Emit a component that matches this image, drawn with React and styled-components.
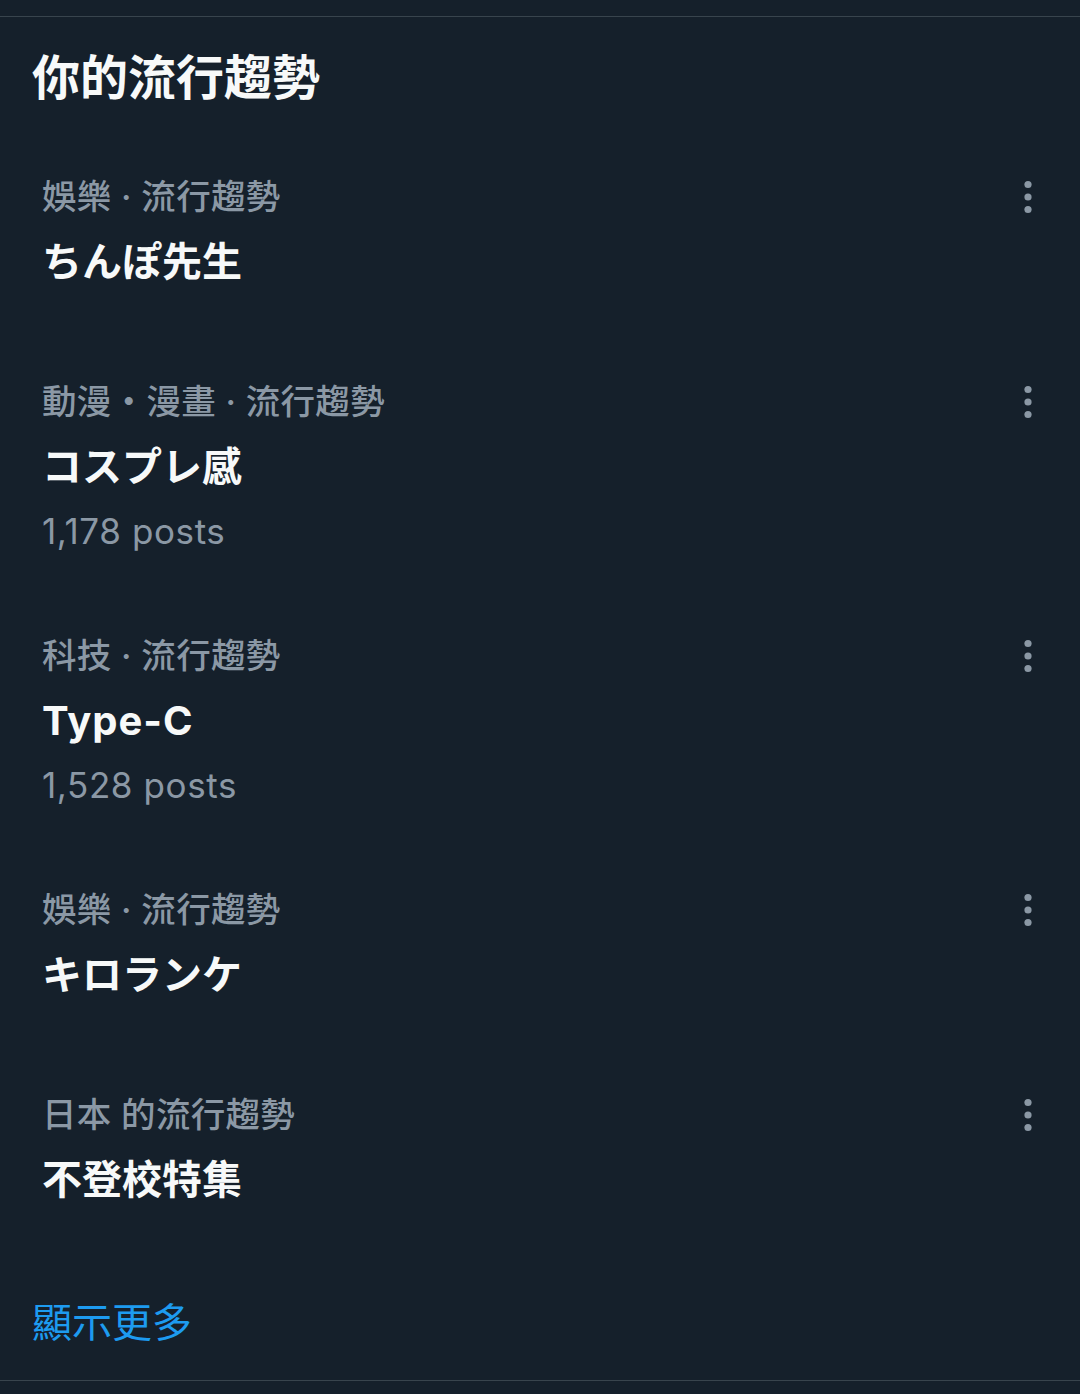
import styled, { createGlobalStyle } from "styled-components";

const GlobalStyle = createGlobalStyle`
  html, body {
    margin: 0;
    padding: 0;
    background: #15202b;
  }
  body {
    font-family: Inter, "Noto Sans CJK TC", sans-serif;
    -webkit-font-smoothing: antialiased;
  }
`;

const Page = styled.div`
  padding-top: 16px;
  min-height: 1394px;
  box-sizing: border-box;
  background: #15202b;
`;

const Panel = styled.section`
  border-top: 1px solid #38444d;
  border-bottom: 1px solid #38444d;
`;

const Header = styled.h2`
  margin: 0;
  padding: 33px 32px 36px;
  height: 125px;
  box-sizing: border-box;
  font-size: 48px;
  line-height: 56px;
  font-weight: 700;
  color: #f7f9f9;
`;

const Row = styled.div`
  display: flex;
  align-items: flex-start;
  min-height: 205px;
  box-sizing: border-box;
  padding: 30px 28px 45px 42px;
`;

const Body = styled.div`
  flex: 1;
  display: flex;
  flex-direction: column;
  gap: 16px;
`;

const Category = styled.div`
  font-size: 34.5px;
  line-height: 49px;
  font-weight: 500;
  color: #8b98a5;
  letter-spacing: 0.3px;
`;

const Title = styled.div`
  font-size: 40px;
  line-height: 49px;
  font-weight: 700;
  color: #f7f9f9;
  letter-spacing: ${(p) => (p.$latin ? "1px" : "0")};
`;

const Posts = styled.div`
  font-size: 35px;
  line-height: 49px;
  color: #8b98a5;
  letter-spacing: 0.6px;
`;

const MoreButton = styled.button`
  width: 49px;
  height: 49px;
  padding: 0;
  border: 0;
  background: transparent;
  display: flex;
  align-items: center;
  justify-content: center;
  color: #8b98a5;
`;

const Footer = styled.div`
  padding: 33px 32px 32px;
  height: 115px;
  box-sizing: border-box;
`;

const ShowMore = styled.a`
  font-size: 40px;
  line-height: 50px;
  color: #1d9bf0;
  text-decoration: none;
`;

const trends = [
  { category: "娛樂 · 流行趨勢", title: "ちんぽ先生" },
  { category: "動漫・漫畫 · 流行趨勢", title: "コスプレ感", posts: "1,178 posts" },
  { category: "科技 · 流行趨勢", title: "Type-C", posts: "1,528 posts", latin: true },
  { category: "娛樂 · 流行趨勢", title: "キロランケ" },
  { category: "日本 的流行趨勢", title: "不登校特集" },
];

const Dots = () => (
  <svg width="10" height="36" viewBox="0 0 10 36">
    <circle cx="5" cy="5.5" r="3.6" fill="currentColor" />
    <circle cx="5" cy="18" r="3.6" fill="currentColor" />
    <circle cx="5" cy="30.5" r="3.6" fill="currentColor" />
  </svg>
);

const App = () => {
  return (
    <Page>
      <GlobalStyle />
      <Panel>
        <Header>你的流行趨勢</Header>
        {trends.map((t, i) => (
          <Row key={i}>
            <Body>
              <Category>{t.category}</Category>
              <Title $latin={t.latin}>{t.title}</Title>
              {t.posts && <Posts>{t.posts}</Posts>}
            </Body>
            <MoreButton aria-label="更多">
              <Dots />
            </MoreButton>
          </Row>
        ))}
        <Footer>
          <ShowMore href="#">顯示更多</ShowMore>
        </Footer>
      </Panel>
    </Page>
  );
};

export default App;
